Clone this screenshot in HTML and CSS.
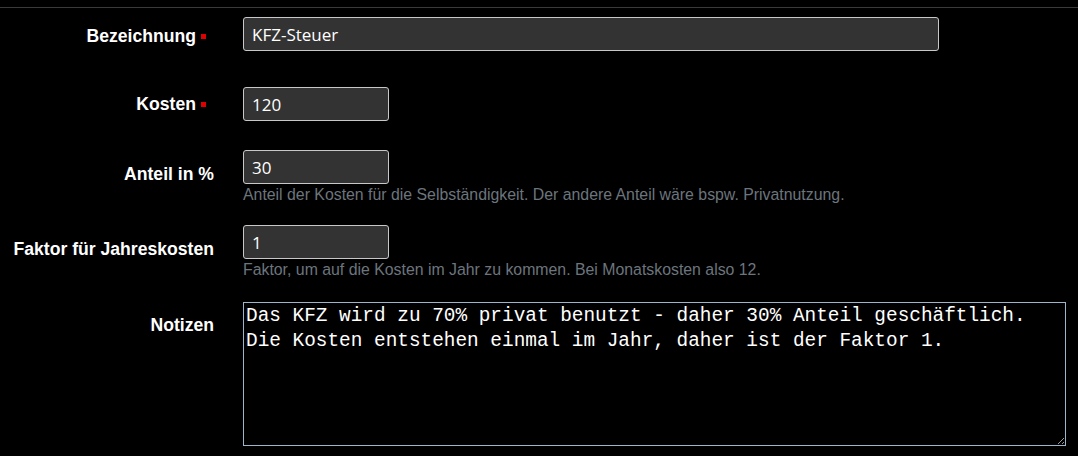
FILE: index.html
```html
<!DOCTYPE html>
<html lang="de">
<head>
<meta charset="utf-8">
<title>Kosten</title>
<link rel="stylesheet" href="styles.css">
</head>
<body>
<div class="page">
  <form class="form">
    <div class="row row--r1">
      <label class="label">Bezeichnung<span class="req"></span></label>
      <div class="field"><input class="input input--wide" type="text" value="KFZ-Steuer"></div>
    </div>
    <div class="row row--r2">
      <label class="label label--r2">Kosten<span class="req"></span></label>
      <div class="field"><input class="input input--small" type="text" value="120"></div>
    </div>
    <div class="row row--r3">
      <label class="label label--help">Anteil in %</label>
      <div class="field">
        <input class="input input--small" type="text" value="30">
        <div class="help">Anteil der Kosten für die Selbständigkeit. Der andere Anteil wäre bspw. Privatnutzung.</div>
      </div>
    </div>
    <div class="row row--r4">
      <label class="label label--help">Faktor für Jahreskosten</label>
      <div class="field">
        <input class="input input--small" type="text" value="1">
        <div class="help">Faktor, um auf die Kosten im Jahr zu kommen. Bei Monatskosten also 12.</div>
      </div>
    </div>
    <div class="row">
      <label class="label label--notes">Notizen</label>
      <div class="field"><textarea class="notes">Das KFZ wird zu 70% privat benutzt - daher 30% Anteil geschäftlich.
Die Kosten entstehen einmal im Jahr, daher ist der Faktor 1.</textarea></div>
    </div>
  </form>
</div>
</body>
</html>
```

FILE: styles.css
```css
html, body {
  margin: 0;
  padding: 0;
  background: #000;
  color: #fff;
  font-family: "Liberation Sans", Arial, sans-serif;
}

.page {
  margin-top: 7px;
  border-top: 1px solid #3a3a3a;
  padding-top: 9px;
}

.form {
  display: flex;
  flex-direction: column;
}

.row {
  display: grid;
  grid-template-columns: 214px 1fr;
  column-gap: 29px;
  align-items: start;
}

.row--r1 { margin-bottom: 36px; }
.row--r2 { margin-bottom: 29px; }
.row--r3 { margin-bottom: 21px; }
.row--r4 { margin-bottom: 23px; }

.label {
  font-weight: bold;
  font-size: 17.6px;
  text-align: right;
  padding-top: 9px;
  white-space: nowrap;
}

.label--r2 { padding-top: 7px; }
.label--help { padding-top: 13.5px; }
.label--notes { padding-top: 13px; }

.req {
  display: inline-block;
  width: 5px;
  height: 5px;
  background: #e00000;
  margin-left: 5px;
  vertical-align: 0.15em;
}

.row--r1 .label, .row--r2 .label { padding-right: 8px; }

.field {
  display: flex;
  flex-direction: column;
  align-items: flex-start;
}

.input {
  box-sizing: border-box;
  height: 34px;
  background: #333;
  color: #fff;
  border: 1px solid #c8c8c8;
  border-radius: 3px;
  padding: 0 8px;
  font-family: "Open Sans", "Noto Sans", sans-serif;
  font-size: 17px;
  outline: none;
}

.input--wide { width: 696px; }
.input--small { width: 146px; }

.help {
  margin-top: 2px;
  font-size: 15.85px;
  line-height: 18px;
  color: #6c757d;
}

.notes {
  box-sizing: border-box;
  width: 823px;
  height: 144px;
  margin: 0;
  background: #000;
  color: #fff;
  border: 1px solid #9bb6cc;
  border-radius: 0;
  padding: 1px 2px;
  font-family: "Liberation Mono", monospace;
  font-size: 19.4px;
  line-height: 25px;
  outline: none;
}
```
